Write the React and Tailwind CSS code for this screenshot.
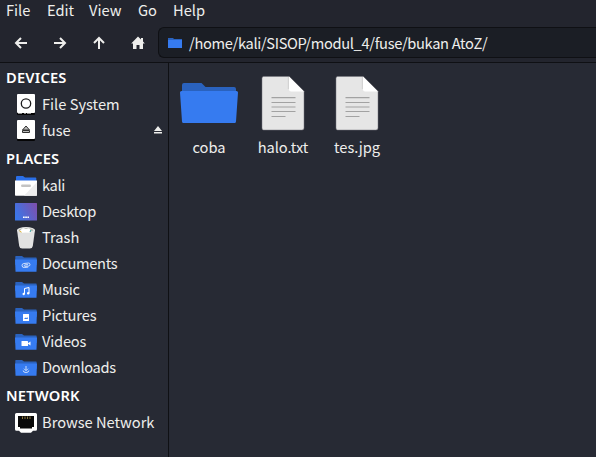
import React from "react";

function Folder({ children }) {
  return (
    <svg className="size-6 shrink-0" viewBox="0 0 24 24">
      <path d="M1.3 5.600q0-.6.6-.6H8l2 1.600h12.100q.6 0 .6.600V14H1.300z" fill="#2a62be" />
      <path d="M1 8.400h22l-.5 12.400h-21z" fill="#367bf0" />
      {children}
    </svg>
  );
}

function DriveIcon({ eject }) {
  return (
    <svg className="size-6 shrink-0" viewBox="0 0 24 24">
      <rect x="3" y="3" width="18" height="20" rx="1" fill="#050506" />
      <rect x="3" y="2" width="18" height="19" rx="1" fill="#fff" />
      {eject ? (
        <g stroke="#303030" strokeWidth="1" fill="#bbb">
          <path d="M12 8l3.500 4H8.500z" />
          <path d="M8.500 12.500h7v2h-7z" />
        </g>
      ) : (
        <>
          <circle cx="12" cy="11.500" r="4.700" fill="#fff" stroke="#1c1c1e" strokeWidth="1.300" />
          <path d="M4 21.500h4M10 21.500h2M13 21.500h4" stroke="#909090" strokeWidth="1" />
        </>
      )}
    </svg>
  );
}

function HomeFolder() {
  return (
    <svg className="size-6 shrink-0" viewBox="0 0 24 24">
      <path d="M2 4q0-1 1-1h6l2 1.500h10.500q.8 0 .8.800V10H2z" fill="#2a6fe8" />
      <path d="M1 7.500h22V22q0 .800-.8.800H1.800q-.8 0-.8-.8z" fill="#fff" />
      <path d="M23 9v13q0 .800-.8.800H10z" fill="#ededee" />
      <rect x="7" y="11.500" width="10" height="2.500" rx="1.200" fill="#c3c3c3" />
    </svg>
  );
}

function DesktopIcon() {
  return (
    <svg className="size-6 shrink-0" viewBox="0 0 24 24">
      <defs>
        <linearGradient id="desk" x1="0" y1=".6" x2="1" y2=".2">
          <stop stopColor="#3b76e8" />
          <stop offset="1" stopColor="#7c50ae" />
        </linearGradient>
      </defs>
      <rect x="1" y="4" width="22" height="17.500" rx=".5" fill="url(#desk)" />
      <path d="M9 18.300h1.700M11.200 18.300h1.700M13.400 18.300H15" stroke="#fff" strokeWidth="1.500" />
    </svg>
  );
}

function TrashIcon() {
  return (
    <svg className="size-6 shrink-0" viewBox="0 0 24 24">
      <path d="M3 5l2.200 16q.4 2.500 3 2.500h7.600q2.600 0 3-2.500L21 5z" fill="#e2e2e2" />
      <ellipse cx="12" cy="5" rx="9" ry="3" fill="#e8e8e8" />
      <ellipse cx="12" cy="5.300" rx="7.500" ry="2.200" fill="#b8bab0" />
      <path d="M6 5.500l3-2.500 3 1 3-.8 3 3-3 1.500H8z" fill="#fff" />
      <path d="M5.500 6l2 1.200" stroke="#e5b936" strokeWidth="1" />
      <path d="M17 5l-1 2" stroke="#299b9b" strokeWidth="1" />
    </svg>
  );
}

function NetworkIcon() {
  return (
    <svg className="size-6 shrink-0" viewBox="0 0 24 24">
      <path d="M2.500 3h19Q23 3 23 4.500v14.700q0 1.500-1.500 1.500H19l-2 2H7l-2-2H2.500Q1 20.700 1 19.200V4.500Q1 3 2.500 3z" fill="#fff" />
      <path d="M4 6h16v11h-2v1.500H6V17H4z" fill="#090909" />
      <path d="M8.500 6.500V9M11 6.500V9M13.500 6.500V9M16 6.500V9" stroke="#8a773c" strokeWidth="1" />
    </svg>
  );
}

function Heading({ children, first }) {
  return (
    <div className={(first ? "h-7" : "h-[29px]") + " flex items-center pl-1.5 font-['Noto_Sans',sans-serif] font-semibold tracking-[0.2px] text-white"}>
      {children}
    </div>
  );
}

function Row({ icon, label, tight = "tracking-normal", children }) {
  return (
    <div className="flex h-[26px] items-center gap-1 pl-3.5 pr-1.5">
      {icon}
      <span className={"flex-1 " + tight}>{label}</span>
      {children}
    </div>
  );
}

function ToolButton({ d, fill }) {
  return (
    <span className="flex h-9 w-[39px] items-center justify-center">
      <svg className="size-4" viewBox="0 0 16 16" fill={fill ? "#eeeeec" : "none"} stroke={fill ? "none" : "#eeeeec"} strokeWidth="2">
        <path d={d} />
      </svg>
    </span>
  );
}

function FileItem({ label, folder }) {
  return (
    <div className="flex w-[74px] flex-col items-center">
      <svg className="size-16" viewBox="0 0 64 64">
        {folder ? (
          <>
            <path d="M5 14q0-2 2-2h17.500l4 4H57q2 0 2 2v15H5z" fill="#2a62be" />
            <path d="M4.500 20h55q1.500 0 1.500 1.500L59 50.500q-.1 1.500-1.500 1.500H6.500Q5.100 52 5 50.500L3 21.500Q3 20 4.500 20z" fill="#367bf0" />
          </>
        ) : (
          <>
            <path d="M12.500 5.500H38l15 15V57q0 2-2 2H12.500q-1.500 0-1.500-2V7.500q0-2 1.500-2z" fill="#e6e6e6" stroke="#77777c" strokeWidth=".5" />
            <path d="M37.300 6v12" stroke="#cfcfcf" strokeWidth="1" />
            <path d="M38 5.500l15 15H40q-2 0-2-2z" fill="#fff" />
            <path d="M20.500 26.600h24M20.500 31.500h24M20.500 36h24M20.500 40.500h24M20.500 45.500h14" stroke="#a2a2a2" strokeWidth="1.200" />
          </>
        )}
      </svg>
      <span className="mt-0.5 leading-5 tracking-[-0.05px]">{label}</span>
    </div>
  );
}

const menus = [
  ["File", "w-[41px]"],
  ["Edit", "w-[42px]"],
  ["View", "w-[49px]"],
  ["Go", "w-[35px]"],
  ["Help", "w-10"],
];

export default function App() {
  return (
    <div className="flex h-[457px] w-[596px] flex-col overflow-hidden whitespace-nowrap bg-[#272a34] font-['Noto_Sans_CJK_SC','Noto_Sans',sans-serif] text-[14.67px] leading-5 text-[#eeeeec]">
      <nav className="flex h-[23px] shrink-0 items-start bg-[#23252e] pl-1.5">
        {menus.map(([m, w]) => (
          <span key={m} className={w}>{m}</span>
        ))}
      </nav>
      <div className="flex h-10 shrink-0 items-center border-b border-[#0f1014] bg-[#23252e] pl-px">
        <ToolButton d="M14 8H3M8 3L3 8l5 5" />
        <ToolButton d="M2 8h11M8 3l5 5-5 5" />
        <ToolButton d="M8 14V3M3 8l5-5 5 5" />
        <ToolButton fill d="M8 1.500L1.200 8.500H3V14h3.500v-4h3v4H13V8.500h1.800L13 6.500V3h-2v1.500z" />
        <div className="ml-px flex h-[31px] flex-1 items-center gap-[7px] rounded-l-md border border-r-0 border-[#0f1014] bg-[#1b1e25] pl-[9px]">
          <svg className="size-3.5" viewBox="0 0 14 14">
            <path d="M0 2h5l1 1h8v5H0z" fill="#2a62be" />
            <path d="M0 4h14v8H0z" fill="#367bf0" />
          </svg>
          <span className="tracking-[-0.34px]">/home/kali/SISOP/modul_4/fuse/bukan AtoZ/</span>
        </div>
      </div>
      <div className="flex min-h-0 flex-1">
        <aside className="w-[169px] shrink-0 border-r border-[#0f1014]">
          <Heading first>DEVICES</Heading>
          <Row icon={<DriveIcon />} label="File System" />
          <Row icon={<DriveIcon eject />} label="fuse">
            <svg className="h-2 w-2" viewBox="0 0 8 8" fill="#eeeeec">
              <path d="M4 0l4 5H0zM0 6h8v1.500H0z" />
            </svg>
          </Row>
          <Heading>PLACES</Heading>
          <Row icon={<HomeFolder />} label="kali" tight="tracking-[-0.4px]" />
          <Row icon={<DesktopIcon />} label="Desktop" tight="tracking-[-0.3px]" />
          <Row icon={<TrashIcon />} label="Trash" />
          <Row
            label="Documents"
            tight="tracking-[-0.33px]"
            icon={
              <Folder>
                <path d="M14 16.300H10a2 2 0 0 1 0-4h4.500a1.500 1.500 0 0 1 0 3H11a.7.700 0 0 1 0-1.500h3" fill="none" stroke="#d9e6fd" strokeWidth=".9" transform="rotate(-6 12 14)" />
              </Folder>
            }
          />
          <Row
            label="Music"
            tight="tracking-[-0.3px]"
            icon={
              <Folder>
                <path d="M10.500 17v-5.500l4.500-1V16" fill="none" stroke="#fff" strokeWidth="1" />
                <circle cx="9.700" cy="17" r="1.200" fill="#fff" />
                <circle cx="14.200" cy="16.200" r="1.200" fill="#fff" />
              </Folder>
            }
          />
          <Row
            label="Pictures"
            tight="tracking-[-0.15px]"
            icon={
              <Folder>
                <rect x="9" y="11" width="6" height="7" rx=".3" fill="#fff" />
                <path d="M10 16l1.500-1.500.8.700.9-1.200.8 2z" fill="#367bf0" />
              </Folder>
            }
          />
          <Row
            label="Videos"
            tight="tracking-[-0.2px]"
            icon={
              <Folder>
                <rect x="7.500" y="12" width="6.500" height="5" rx=".5" fill="#fff" />
                <path d="M13.500 14.500l3-2v4z" fill="#fff" />
              </Folder>
            }
          />
          <Row
            label="Downloads"
            tight="tracking-[-0.3px]"
            icon={
              <Folder>
                <path d="M12 11v4.500M10 13.700l2 2 2-2M9.200 15.500q0 2 2.800 2t2.800-2" fill="none" stroke="#d9e6fd" strokeWidth=".9" />
              </Folder>
            }
          />
          <Heading>NETWORK</Heading>
          <Row icon={<NetworkIcon />} label="Browse Network" />
        </aside>
        <main className="flex flex-1 items-start pl-[3px] pt-2">
          <FileItem folder label="coba" />
          <FileItem label="halo.txt" />
          <FileItem label="tes.jpg" />
        </main>
      </div>
    </div>
  );
}
